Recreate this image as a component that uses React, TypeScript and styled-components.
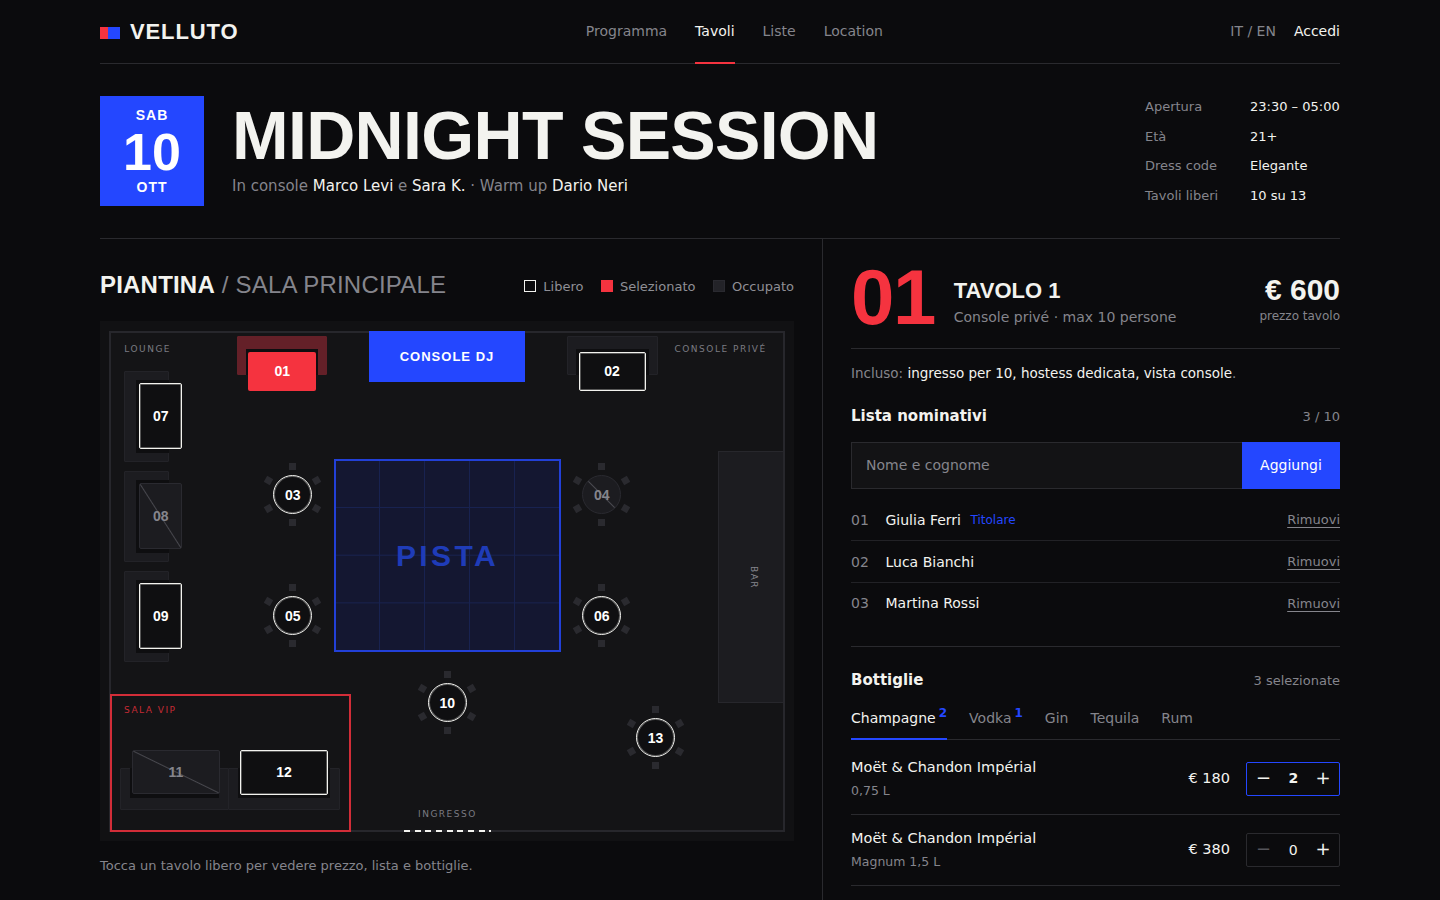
import React from "react";
import styled, { createGlobalStyle } from "styled-components";

const RED = "#f5333f";
const BLUE = "#2447ff";
const SANS = `"DejaVu Sans", sans-serif`;
const HEAD = `"Liberation Sans", Arial, sans-serif`;

const Global = createGlobalStyle`
  html, body { margin: 0; padding: 0; background: #0b0b0d; height: 900px; overflow: hidden; }
  * { box-sizing: border-box; }
  body { font-family: ${SANS}; color: #f3f3ef; }
`;

const Page = styled.div`
  padding: 0 100px;
  height: 900px;
  overflow: hidden;
`;

/* top bar */
const TopBar = styled.header`
  height: 64px;
  display: flex;
  justify-content: space-between;
  align-items: stretch;
  border-bottom: 1px solid #2a2a2e;
`;
const Brand = styled.div`
  display: flex;
  align-items: center;
  gap: 10px;
  font: 700 22px ${HEAD};
  letter-spacing: 0.88px;
`;
const BrandMark = styled.span`
  display: block;
  width: 20px;
  height: 12px;
  margin-top: 2px;
  background: linear-gradient(90deg, ${RED} 0 8px, ${BLUE} 8px 20px);
`;
const Nav = styled.nav`
  display: flex;
  gap: 28px;
`;
const NavLink = styled.a<{ $active?: boolean }>`
  display: flex;
  align-items: center;
  height: 64px;
  font-size: 14px;
  color: ${(p) => (p.$active ? "#f3f3ef" : "#85858c")};
  border-bottom: 2px solid ${(p) => (p.$active ? RED : "transparent")};
`;
const TopRight = styled.div`
  display: flex;
  justify-content: flex-end;
  align-items: center;
  gap: 18px;
  padding-bottom: 2px;
  font-size: 14px;
`;
const Lang = styled.span`
  color: #85858c;
`;

/* hero */
const Hero = styled.section`
  height: 175px;
  padding-top: 32px;
  display: flex;
  border-bottom: 1px solid #2a2a2e;
`;
const DateBox = styled.div`
  width: 104px;
  height: 110px;
  background: ${BLUE};
  color: #fff;
  display: flex;
  flex-direction: column;
  align-items: center;
  padding-top: 11px;
  font-family: ${HEAD};
`;
const DateSmall = styled.span`
  font-size: 14px;
  font-weight: 700;
  letter-spacing: 1px;
  line-height: 16px;
`;
const DateDay = styled.span`
  font-size: 52px;
  font-weight: 700;
  line-height: 50px;
  margin: 4px 0 2px;
`;
const HeroText = styled.div`
  margin-left: 28px;
  flex: 1;
`;
const Title = styled.h1`
  margin: 0;
  font: 700 68px/78px ${HEAD};
  letter-spacing: -0.68px;
  color: #f3f3ef;
`;
const Sub = styled.p`
  margin: 1px 0 0;
  font-size: 15px;
  line-height: 22px;
  color: #85858c;
  b { font-weight: 400; color: #f3f3ef; }
`;
const Specs = styled.dl`
  margin: -4.5px 0 0;
  display: grid;
  grid-template-columns: 105px 90px;
  grid-auto-rows: 29.7px;
  align-items: center;
  align-content: start;
  font-size: 13px;
  dt { color: #85858c; }
  dd { margin: 0; color: #f3f3ef; }
`;

/* two columns */
const Main = styled.div`
  display: grid;
  grid-template-columns: 723px 1fr;
  min-height: 700px;
`;
const Left = styled.section`
  border-right: 1px solid #2a2a2e;
  padding-right: 28px;
`;
const LeftHead = styled.div`
  height: 82px;
  display: flex;
  align-items: center;
  justify-content: space-between;
  padding-top: 12px;
`;
const PlanTitle = styled.h2`
  margin: -2px 0 0;
  font: 400 24px ${HEAD};
  letter-spacing: 0.2px;
  color: #85858c;
  b { font-weight: 700; color: #f3f3ef; }
`;
const Legend = styled.div`
  display: flex;
  gap: 17.5px;
  font-size: 13px;
  color: #8f8f95;
`;
const LegendItem = styled.span`
  display: flex;
  align-items: center;
  gap: 7px;
`;
const Swatch = styled.i<{ $kind: "free" | "sel" | "busy" }>`
  width: 12px;
  height: 12px;
  border: 1px solid
    ${(p) => (p.$kind === "free" ? "#f3f3ef" : p.$kind === "sel" ? RED : "#2a2a30")};
  background: ${(p) => (p.$kind === "sel" ? RED : p.$kind === "busy" ? "#232328" : "transparent")};
`;

/* floor plan: free canvas, children placed by coordinates relative to the panel */
const FloorPanel = styled.div`
  position: relative;
  width: 694px;
  height: 520px;
  background: #111113;
`;
const FloorLine = styled.div`
  position: absolute;
  left: 9px;
  top: 10px;
  width: 676px;
  height: 501px;
  background: #141416;
  border: 2px solid #27272c;
`;
type Box = { $x: number; $y: number; $w: number; $h: number };
const Placed = styled.div<Box>`
  position: absolute;
  left: ${(p) => p.$x - 100}px;
  top: ${(p) => p.$y - 321}px;
  width: ${(p) => p.$w}px;
  height: ${(p) => p.$h}px;
`;
const Console = styled(Placed)`
  background: ${BLUE};
  color: #fff;
  display: flex;
  align-items: center;
  justify-content: center;
  font: 700 13px ${HEAD};
  letter-spacing: 1px;
`;
const Sofa = styled(Placed)<{ $open: "down" | "right" | "up"; $sel?: boolean }>`
  background: ${(p) => (p.$sel ? "#642028" : "#1c1c20")};
  border: 1px solid ${(p) => (p.$sel ? "#642028" : "#232328")};
  border-radius: 1px;
  &::after {
    content: "";
    position: absolute;
    background: #0e0e10;
    ${(p) =>
      p.$open === "down"
        ? "left: 8px; right: 8px; top: 12px; bottom: -1px;"
        : p.$open === "right"
        ? "left: 11px; right: -1px; top: 8px; bottom: 8px;"
        : "left: 9px; right: 9px; top: -1px; bottom: 11px;"}
  }
`;
const Table = styled(Placed)<{ $state: "free" | "sel" | "busy"; $round?: boolean }>`
  display: flex;
  align-items: center;
  justify-content: center;
  font: 700 14px ${HEAD};
  border-radius: ${(p) => (p.$round ? "50%" : "2px")};
  z-index: 2;
  ${(p) =>
    p.$state === "free"
      ? `background: #0f0f11; border: 1px solid #f3f3ef; box-shadow: inset 0 0 0 1px rgba(240, 240, 236, 0.32); color: #fff;`
      : p.$state === "sel"
      ? `background: ${RED}; color: #fff;`
      : `background: linear-gradient(to top right, #1c1c20 calc(50% - 1px), #47474d 50%, #1c1c20 calc(50% + 1px));
         border: 1px solid #2a2a30; color: #85858c;`}
`;
const Chair = styled.span<{ $cx: number; $cy: number; $deg: number }>`
  position: absolute;
  left: ${(p) => p.$cx - 100 - 3.5}px;
  top: ${(p) => p.$cy - 321 - 3.5}px;
  width: 7px;
  height: 7px;
  background: #2a2a2f;
  transform: rotate(${(p) => p.$deg}deg);
`;
const Pista = styled(Placed)`
  border: 2px solid #2240d8;
  background-color: #141731;
  background-image:
    linear-gradient(90deg, #182250 1px, transparent 1px),
    linear-gradient(#182250 1px, transparent 1px);
  background-size: 45px 47.7px;
  background-position: 43px 46px;
  display: flex;
  align-items: center;
  justify-content: center;
  color: #1f3cb8;
  font: 700 30px ${HEAD};
  letter-spacing: 3.4px;
`;
const Bar = styled(Placed)`
  background: #1c1c20;
  border: 1px solid #27272c;
  display: flex;
  align-items: center;
  justify-content: center;
  span {
    writing-mode: vertical-rl;
    font-size: 9px;
    letter-spacing: 1.5px;
    color: #85858c;
    margin: 1px 0 0 5px;
  }
`;
const Vip = styled(Placed)`
  border: 2px solid #d22d38;
`;
const ZoneLabel = styled.span<{ $x: number; $y: number; $vip?: boolean }>`
  position: absolute;
  left: ${(p) => p.$x - 100}px;
  top: ${(p) => p.$y - 321}px;
  font-size: 9px;
  line-height: 12px;
  letter-spacing: 1.5px;
  color: ${(p) => (p.$vip ? "#c62b35" : "#7b7b82")};
  white-space: nowrap;
  z-index: 3;
`;
const Door = styled(Placed)`
  background: repeating-linear-gradient(90deg, #f3f3ef 0 6px, transparent 6px 10.67px);
`;
const Note = styled.p`
  margin: 16px 0 0;
  font-size: 13px;
  line-height: 18px;
  color: #85858c;
`;

/* right column */
const Right = styled.section`
  padding: 0 0 0 28px;
`;
const Head = styled.div`
  height: 110px;
  display: flex;
  align-items: center;
  border-bottom: 1px solid #2a2a2e;
`;
const BigNum = styled.div`
  font: 700 78px/76px ${HEAD};
  color: ${RED};
  margin: 6px 19px 0 0;
  letter-spacing: -1.5px;
`;
const HeadText = styled.div`
  flex: 1;
  padding-top: 17px;
`;
const TableName = styled.div`
  font: 700 22px/26px ${HEAD};
`;
const TableSub = styled.div`
  margin-top: 3px;
  font-size: 14px;
  line-height: 20px;
  color: #85858c;
`;
const PriceBox = styled.div`
  text-align: right;
  padding-top: 13px;
`;
const Price = styled.div`
  font: 700 30px/32px ${HEAD};
`;
const PriceSub = styled.div`
  font-size: 12px;
  line-height: 20px;
  color: #85858c;
`;
const Included = styled.p`
  margin: 14px 0 0;
  font-size: 13.5px;
  line-height: 20px;
  color: #85858c;
  b { font-weight: 400; color: #f3f3ef; }
`;
const SectionHead = styled.div<{ $top: number }>`
  margin-top: ${(p) => p.$top}px;
  display: flex;
  justify-content: space-between;
  align-items: center;
  height: 22px;
  h3 { margin: 0; font-size: 15px; font-weight: 700; }
  span { font-size: 13px; color: #85858c; }
`;
const InputRow = styled.div`
  margin-top: 15px;
  height: 47px;
  display: flex;
  background: #131315;
  border: 1px solid #2a2a2e;
  font-size: 14px;
`;
const FakeInput = styled.div`
  flex: 1;
  padding: 0 0 2px 14px;
  display: flex;
  align-items: center;
  color: #85858c;
`;
const AddButton = styled.button`
  width: 98px;
  margin: -1px;
  padding: 0 0 2px;
  border: 0;
  background: ${BLUE};
  color: #fff;
  font: 14px ${SANS};
`;
const GuestList = styled.ul`
  list-style: none;
  margin: 10px 0 0;
  padding: 0 0 21px;
  border-bottom: 1px solid #2a2a2e;
`;
const Guest = styled.li`
  height: 42px;
  display: flex;
  align-items: center;
  font-size: 14px;
  border-bottom: 1px solid #222226;
  &:last-child { border-bottom-color: transparent; padding-bottom: 1px; }
`;
const GuestNum = styled.span`
  width: 34.5px;
  color: #85858c;
`;
const Owner = styled.span`
  margin-left: 9.5px;
  font-size: 12px;
  color: ${BLUE};
`;
const Remove = styled.a`
  margin-left: auto;
  font-size: 13px;
  color: #85858c;
  text-decoration: underline;
  text-underline-offset: 3px;
`;
const Tabs = styled.div`
  margin-top: 11px;
  display: flex;
  gap: 22px;
  height: 38px;
  border-bottom: 1px solid #2a2a2e;
`;
const Tab = styled.a<{ $active?: boolean }>`
  height: 38px;
  display: flex;
  align-items: center;
  font-size: 14px;
  padding-bottom: 4px;
  color: ${(p) => (p.$active ? "#f3f3ef" : "#85858c")};
  border-bottom: 2px solid ${(p) => (p.$active ? BLUE : "transparent")};
  sup {
    font-size: 12px;
    font-weight: 700;
    color: ${BLUE};
    margin: -10px 0 0 3px;
    line-height: 10px;
    align-self: center;
  }
`;
const BottleList = styled.div`
  padding-top: 4px;
`;
const Bottle = styled.div`
  height: 71px;
  display: flex;
  align-items: center;
  border-bottom: 1px solid #2a2a2e;
`;
const BottleInfo = styled.div`
  flex: 1;
  padding-bottom: 2px;
`;
const BottleName = styled.div`
  font-size: 14.5px;
  line-height: 20px;
`;
const BottleSize = styled.div`
  margin-top: 5px;
  font-size: 12.5px;
  line-height: 18px;
  color: #85858c;
`;
const BottlePrice = styled.div`
  font-size: 14.5px;
  margin-right: 16px;
  padding-bottom: 2px;
`;
const Stepper = styled.div<{ $on?: boolean }>`
  width: 94px;
  height: 34px;
  display: flex;
  align-items: center;
  justify-content: space-between;
  padding: 0 8.5px 0 9px;
  border: 1px solid ${(p) => (p.$on ? BLUE : "#2a2a2e")};
  border-radius: 2px;
`;
const Qty = styled.span<{ $on?: boolean }>`
  font-size: 14px;
  font-weight: ${(p) => (p.$on ? 700 : 400)};
  margin-bottom: ${(p) => (p.$on ? 2 : 0)}px;
`;
const StepGlyph = styled.span<{ $dim?: boolean }>`
  font-size: 18px;
  line-height: 20px;
  margin-bottom: 2px;
  color: ${(p) => (p.$dim ? "#55555b" : "#f3f3ef")};
`;

type TState = "free" | "sel" | "busy";
const roundTables: { n: string; x: number; y: number; state: TState }[] = [
  { n: "03", x: 292.7, y: 494.5, state: "free" },
  { n: "04", x: 601.7, y: 494.5, state: "busy" },
  { n: "05", x: 292.7, y: 615.8, state: "free" },
  { n: "06", x: 601.7, y: 615.8, state: "free" },
  { n: "10", x: 447.2, y: 702.8, state: "free" },
  { n: "13", x: 655.5, y: 737.8, state: "free" },
];
const sideTables: { n: string; y: number; state: TState }[] = [
  { n: "07", y: 371, state: "free" },
  { n: "08", y: 471, state: "busy" },
  { n: "09", y: 571, state: "free" },
];

function RoundTable({ n, x, y, state }: { n: string; x: number; y: number; state: TState }) {
  return (
    <>
      {[0, 60, 120, 180, 240, 300].map((deg) => (
        <Chair
          key={deg}
          $deg={deg}
          $cx={x + 28 * Math.sin((deg * Math.PI) / 180)}
          $cy={y - 28 * Math.cos((deg * Math.PI) / 180)}
        />
      ))}
      <Table $round $state={state} $x={x - 19.5} $y={y - 19.5} $w={39} $h={39}>{n}</Table>
    </>
  );
}

function FloorPlan() {
  return (
    <FloorPanel>
      <FloorLine />
      <ZoneLabel $x={124.3} $y={343}>LOUNGE</ZoneLabel>
      <ZoneLabel $x={674.5} $y={343}>CONSOLE PRIVÉ</ZoneLabel>

      <Console $x={369} $y={331} $w={156} $h={51}>CONSOLE DJ</Console>

      <Sofa $open="down" $sel $x={237} $y={336} $w={90} $h={39} />
      <Table $state="sel" $x={248.3} $y={351.6} $w={68} $h={39.3}>01</Table>
      <Sofa $open="down" $x={567} $y={336} $w={91} $h={39} />
      <Table $state="free" $x={578.5} $y={351.6} $w={67} $h={39.3}>02</Table>

      {sideTables.map((t) => (
        <React.Fragment key={t.n}>
          <Sofa $open="right" $x={124} $y={t.y} $w={45} $h={91} />
          <Table $state={t.state} $x={139.3} $y={t.y + 11.7} $w={43} $h={66.8}>{t.n}</Table>
        </React.Fragment>
      ))}

      {roundTables.map((t) => <RoundTable key={t.n} {...t} />)}

      <Pista $x={334} $y={459} $w={227} $h={193}>PISTA</Pista>
      <Bar $x={718} $y={451} $w={66} $h={252}><span>BAR</span></Bar>

      <Vip $x={110} $y={694} $w={241} $h={138} />
      <ZoneLabel $vip $x={124} $y={704}>SALA VIP</ZoneLabel>
      <Sofa $open="up" $x={120} $y={768} $w={109} $h={42} />
      <Table $state="busy" $x={132} $y={750} $w={88} $h={44}>11</Table>
      <Sofa $open="up" $x={228} $y={768} $w={112} $h={42} />
      <Table $state="free" $x={240} $y={750} $w={88} $h={44.5}>12</Table>

      <ZoneLabel $x={418} $y={808}>INGRESSO</ZoneLabel>
      <Door $x={404} $y={830} $w={87} $h={2} />
    </FloorPanel>
  );
}

export default function App() {
  return (
    <>
      <Global />
      <Page>
        <TopBar>
          <Brand><BrandMark />VELLUTO</Brand>
          <Nav>
            <NavLink>Programma</NavLink>
            <NavLink $active>Tavoli</NavLink>
            <NavLink>Liste</NavLink>
            <NavLink>Location</NavLink>
          </Nav>
          <TopRight><Lang>IT / EN</Lang><span>Accedi</span></TopRight>
        </TopBar>

        <Hero>
          <DateBox>
            <DateSmall>SAB</DateSmall>
            <DateDay>10</DateDay>
            <DateSmall>OTT</DateSmall>
          </DateBox>
          <HeroText>
            <Title>MIDNIGHT SESSION</Title>
            <Sub>In console <b>Marco Levi</b> e <b>Sara K.</b> · Warm up <b>Dario Neri</b></Sub>
          </HeroText>
          <Specs>
            <dt>Apertura</dt><dd>23:30 – 05:00</dd>
            <dt>Età</dt><dd>21+</dd>
            <dt>Dress code</dt><dd>Elegante</dd>
            <dt>Tavoli liberi</dt><dd>10 su 13</dd>
          </Specs>
        </Hero>

        <Main>
          <Left>
            <LeftHead>
              <PlanTitle><b>PIANTINA</b> / SALA PRINCIPALE</PlanTitle>
              <Legend>
                <LegendItem><Swatch $kind="free" />Libero</LegendItem>
                <LegendItem><Swatch $kind="sel" />Selezionato</LegendItem>
                <LegendItem><Swatch $kind="busy" />Occupato</LegendItem>
              </Legend>
            </LeftHead>
            <FloorPlan />
            <Note>Tocca un tavolo libero per vedere prezzo, lista e bottiglie.</Note>
          </Left>

          <Right>
            <Head>
              <BigNum>01</BigNum>
              <HeadText>
                <TableName>TAVOLO 1</TableName>
                <TableSub>Console privé · max 10 persone</TableSub>
              </HeadText>
              <PriceBox>
                <Price>€ 600</Price>
                <PriceSub>prezzo tavolo</PriceSub>
              </PriceBox>
            </Head>
            <Included>Incluso: <b>ingresso per 10, hostess dedicata, vista console</b>.</Included>

            <SectionHead $top={22}><h3>Lista nominativi</h3><span>3 / 10</span></SectionHead>
            <InputRow>
              <FakeInput>Nome e cognome</FakeInput>
              <AddButton>Aggiungi</AddButton>
            </InputRow>
            <GuestList>
              <Guest><GuestNum>01</GuestNum>Giulia Ferri<Owner>Titolare</Owner><Remove>Rimuovi</Remove></Guest>
              <Guest><GuestNum>02</GuestNum>Luca Bianchi<Remove>Rimuovi</Remove></Guest>
              <Guest><GuestNum>03</GuestNum>Martina Rossi<Remove>Rimuovi</Remove></Guest>
            </GuestList>

            <SectionHead $top={22}><h3>Bottiglie</h3><span>3 selezionate</span></SectionHead>
            <Tabs>
              <Tab $active>Champagne<sup>2</sup></Tab>
              <Tab>Vodka<sup>1</sup></Tab>
              <Tab>Gin</Tab>
              <Tab>Tequila</Tab>
              <Tab>Rum</Tab>
            </Tabs>
            <BottleList>
              <Bottle>
                <BottleInfo><BottleName>Moët &amp; Chandon Impérial</BottleName><BottleSize>0,75 L</BottleSize></BottleInfo>
                <BottlePrice>€ 180</BottlePrice>
                <Stepper $on><StepGlyph>−</StepGlyph><Qty $on>2</Qty><StepGlyph>+</StepGlyph></Stepper>
              </Bottle>
              <Bottle>
                <BottleInfo><BottleName>Moët &amp; Chandon Impérial</BottleName><BottleSize>Magnum 1,5 L</BottleSize></BottleInfo>
                <BottlePrice>€ 380</BottlePrice>
                <Stepper><StepGlyph $dim>−</StepGlyph><Qty>0</Qty><StepGlyph>+</StepGlyph></Stepper>
              </Bottle>
            </BottleList>
          </Right>
        </Main>
      </Page>
    </>
  );
}
